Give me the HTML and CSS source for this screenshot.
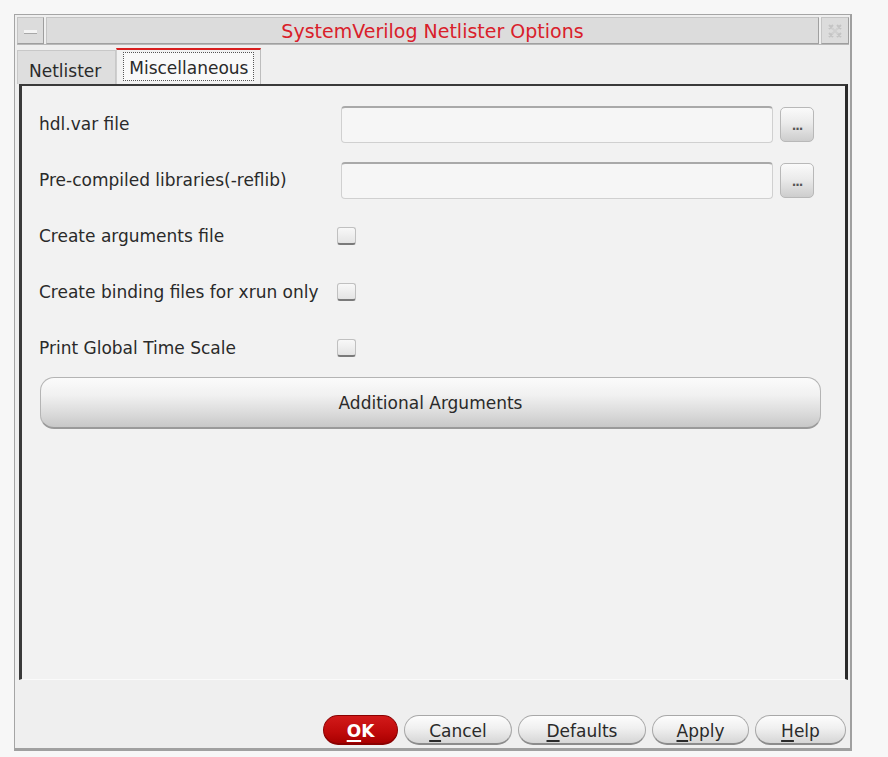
FILE: index.html
```html
<!DOCTYPE html>
<html>
<head>
<meta charset="utf-8">
<title>SystemVerilog Netlister Options</title>
<link rel="stylesheet" href="styles.css">
</head>
<body>
<div class="window">
  <div class="titlebar">
    <div class="wm-btn min-btn"><span class="min-glyph"></span></div>
    <div class="title">SystemVerilog Netlister Options</div>
    <div class="wm-btn close-btn">
      <svg width="18" height="18" viewBox="0 0 18 18"><path d="M3 3 L7 7 M7 3 L3 7 M11 3 L15 7 M15 3 L11 7 M3 11 L7 15 M7 11 L3 15 M11 11 L15 15 M15 11 L11 15" stroke="#c4c4c4" stroke-width="2" fill="none"/><path d="M6 6 L12 12 M12 6 L6 12" stroke="#d0d0d0" stroke-width="2"/></svg>
    </div>
  </div>
  <div class="tabs">
    <div class="tab">Netlister</div>
    <div class="tab active"><span class="focus">Miscellaneous</span></div>
  </div>
  <div class="panel">
    <div class="form">
      <div class="row">
        <div class="label">hdl.var file</div>
        <div class="field"><div class="input"></div><div class="browse">...</div></div>
      </div>
      <div class="row">
        <div class="label">Pre-compiled libraries(-reflib)</div>
        <div class="field"><div class="input"></div><div class="browse">...</div></div>
      </div>
      <div class="row">
        <div class="label">Create arguments file</div>
        <div class="field"><div class="check"></div></div>
      </div>
      <div class="row">
        <div class="label">Create binding files for xrun only</div>
        <div class="field"><div class="check"></div></div>
      </div>
      <div class="row">
        <div class="label">Print Global Time Scale</div>
        <div class="field"><div class="check"></div></div>
      </div>
    </div>
    <div class="big-btn">Additional Arguments</div>
  </div>
  <div class="footer">
    <div class="btn ok"><u>O</u>K</div>
    <div class="btn cancel"><u>C</u>ancel</div>
    <div class="btn defaults"><u>D</u>efaults</div>
    <div class="btn apply"><u>A</u>pply</div>
    <div class="btn help"><u>H</u>elp</div>
  </div>
</div>
</body>
</html>
```
FILE: styles.css
```css
html, body {
  margin: 0;
  padding: 0;
  background: #f7f7f7;
  font-family: "DejaVu Sans", "Open Sans", sans-serif;
  color: #2a2a2a;
}
.window {
  margin: 14px 0 0 14px;
  width: 838px;
  height: 737px;
  box-sizing: border-box;
  background: #efefef;
  border-left: 1px solid #a5a5a5;
  border-top: 1px solid #a5a5a5;
  border-right: 2px solid #a0a0a0;
  border-bottom: 3px solid #a0a0a0;
  padding: 2px 1px 0 2px;
  display: flex;
  flex-direction: column;
}
.titlebar {
  height: 27px;
  display: flex;
  gap: 2px;
  border-bottom: 1px solid #b8b8b8;
}
.wm-btn {
  width: 27px;
  height: 27px;
  box-sizing: border-box;
  background: #dcdcdc;
  border: 1px solid #c4c4c4;
  border-bottom-color: #9e9e9e;
  border-right-color: #9e9e9e;
  display: flex;
  align-items: center;
  justify-content: center;
}
.min-glyph {
  width: 13px;
  height: 3px;
  background: #f4f4f4;
  border-bottom: 1px solid #a8a8a8;
  margin-top: 2px;
}
.title {
  flex: 1;
  background: #dcdcdc;
  border: 1px solid #c4c4c4;
  border-bottom-color: #a0a0a0;
  border-right-color: #a0a0a0;
  color: #d9202a;
  font-size: 19px;
  text-align: center;
  line-height: 26px;
}
.close-btn {
  width: 28px;
}
.tabs {
  height: 39px;
  display: flex;
  align-items: flex-end;
}
.tab {
  height: 34px;
  box-sizing: border-box;
  font-size: 17px;
  line-height: 34px;
  padding: 3px 14px 0 11px;
  background: #dedede;
  border: 1px solid #c8c8c8;
  border-bottom: none;
  color: #2a2a2a;
}
.tab.active {
  height: 36px;
  background: #f2f2f2;
  border-top: 2px solid #d81e1e;
  padding: 2px 6px 0 6px;
  border-left: 1px solid #cfcfcf;
  border-right: 1px solid #bdbdbd;
  line-height: normal;
}
.tab.active .focus {
  display: block;
  border: 1px dotted #555;
  background: #f9f9f9;
  padding: 0 5px;
  height: 29px;
  line-height: 30px;
  box-sizing: border-box;
}
.panel {
  height: 596px;
  box-sizing: border-box;
  margin-left: 2px;
  margin-right: 1px;
  border-left: 3px solid #3a3a3a;
  border-top: 2px solid #3a3a3a;
  border-right: 3px solid #2a2a2a;
  border-bottom: 1px solid #fafafa;
  background: #f2f2f2;
  padding: 10px 25px 0 17px;
}
.row {
  height: 56px;
  display: flex;
  align-items: center;
}
.label {
  width: 302px;
  font-size: 17px;
  color: #2a2a2a;
}
.field {
  display: flex;
  align-items: center;
  gap: 7px;
}
.input {
  width: 432px;
  height: 37px;
  box-sizing: border-box;
  background: #f6f6f6;
  border: 1px solid #d0d0d0;
  border-top: 2px solid #a9a9a9;
  border-radius: 4px;
}
.browse {
  width: 34px;
  height: 35px;
  box-sizing: border-box;
  border: 1px solid #b8b8b8;
  border-radius: 5px;
  background: linear-gradient(#fafafa 0%, #ebebeb 45%, #cdcdcd 100%);
  font-size: 12px;
  color: #555;
  text-align: center;
  line-height: 36px;
  letter-spacing: -1px;
  font-weight: bold;
}
.check {
  width: 19px;
  height: 18px;
  box-sizing: border-box;
  margin-left: -4px;
  border: 1px solid #c0c0c0;
  border-bottom: 2px solid #7a7a7a;
  border-radius: 3px;
  background: linear-gradient(#f8f8f8, #e4e4e4);
}
.big-btn {
  margin-top: 1px;
  margin-left: 1px;
  width: 781px;
  height: 52px;
  box-sizing: border-box;
  border: 1px solid #b4b4b4;
  border-bottom: 2px solid #9a9a9a;
  border-radius: 14px;
  background: linear-gradient(#fbfbfb 0%, #f1f1f1 35%, #dcdcdc 70%, #c8c8c8 100%);
  text-align: center;
  line-height: 50px;
  font-size: 17px;
  color: #2a2a2a;
}
.footer {
  flex: 1;
  display: flex;
  justify-content: flex-end;
  align-items: flex-start;
  padding-top: 35px;
  padding-right: 3px;
  gap: 6px;
}
.btn {
  height: 30px;
  box-sizing: border-box;
  border: 1px solid #a8a8a8;
  border-bottom: 2px solid #8c8c8c;
  border-radius: 15px;
  background: linear-gradient(#fdfdfd 0%, #f0f0f0 45%, #d6d6d6 100%);
  text-align: center;
  font-size: 17px;
  line-height: 30px;
  color: #2a2a2a;
}
.btn u {
  text-decoration-thickness: 2px;
  text-underline-offset: 3px;
}
.btn.ok {
  width: 75px;
  background: linear-gradient(#d21a1a 0%, #bf0a0a 60%, #a80000 100%);
  border-color: #8a0000;
  color: #fff;
  font-weight: bold;
}
.btn.cancel { width: 108px; }
.btn.defaults { width: 128px; }
.btn.apply { width: 97px; }
.btn.help { width: 91px; }
```
